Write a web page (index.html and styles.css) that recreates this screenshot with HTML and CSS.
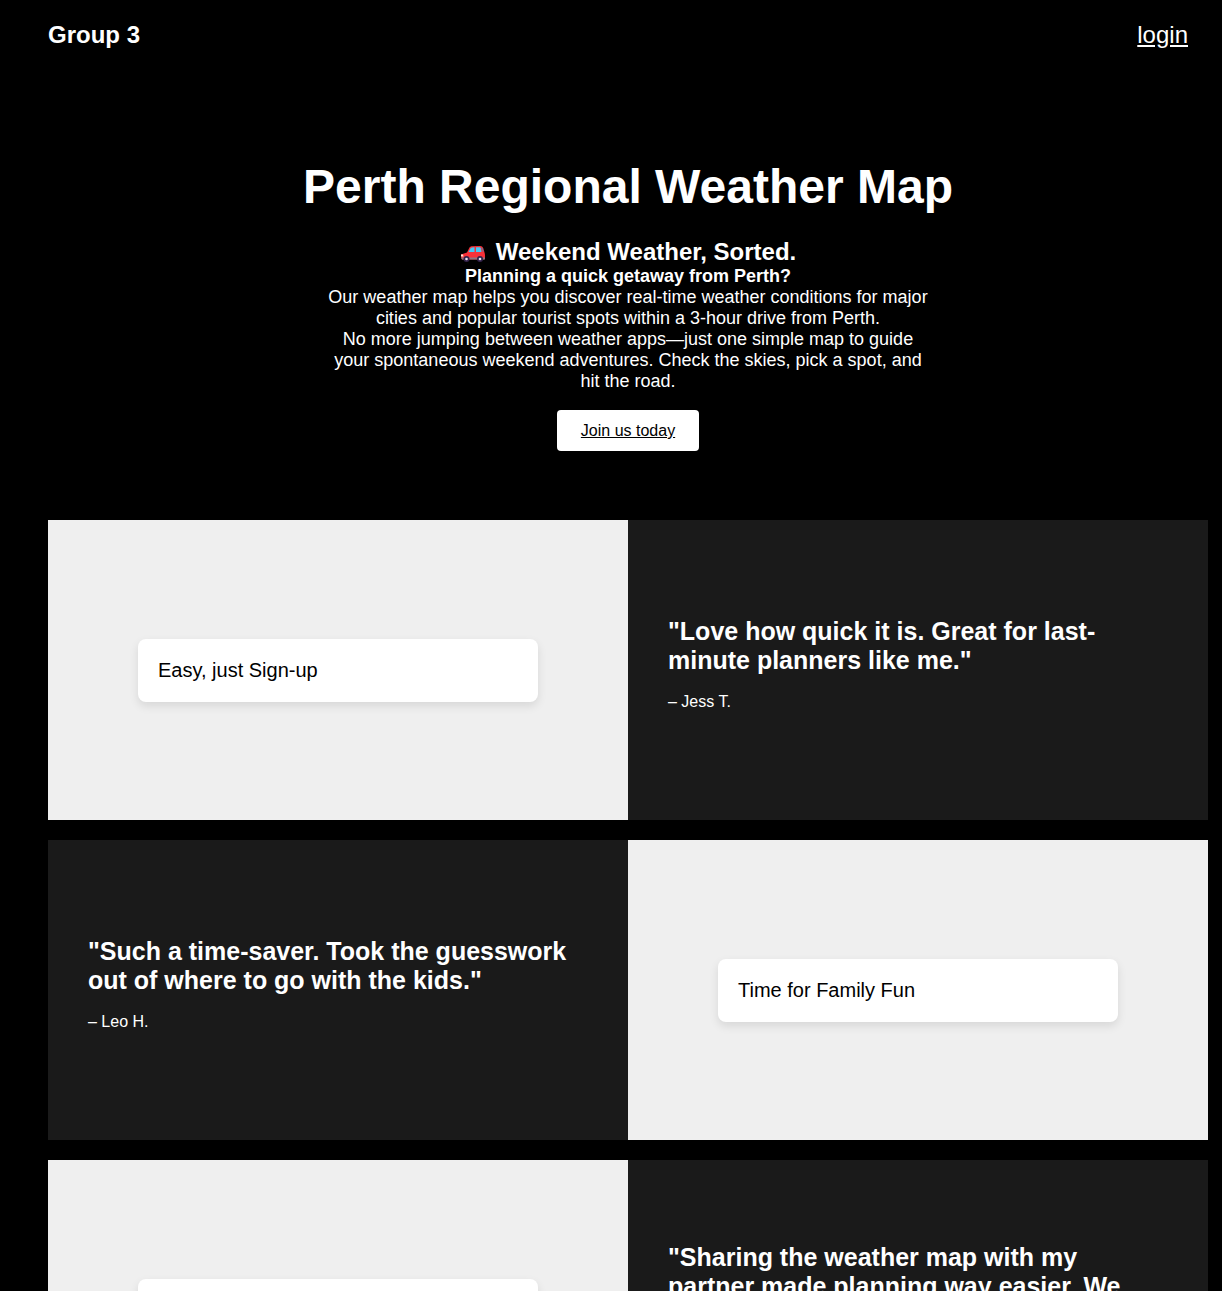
FILE: index.html
```html
<!DOCTYPE html>
<html lang="en">
<head>
<meta charset="utf-8">
<meta name="viewport" content="width=device-width, initial-scale=1">
<title>Perth Regional Weather Map</title>
<link rel="stylesheet" href="styles.css">
</head>
<body>
<div class="page">
  <header class="navbar">
    <div class="brand">Group 3</div>
    <nav><a class="login" href="#login">login</a></nav>
  </header>
  <main>
    <section class="hero">
      <h1 class="hero-title">Perth Regional Weather Map</h1>
      <div class="hero-text">
        <h2 class="hero-subtitle"><svg class="car" viewBox="0 0 26 18" aria-hidden="true">
          <path d="M1 9.500L7 7.500L9.500 2.500Q10 1.500 11.500 1.300L20 1Q22.500 1 23.200 3L24.500 7.500Q25.200 9 25 13L24 14.500H2Q1 13 1 9.500Z" fill="#f83038"/>
          <path d="M8.500 7L10.700 3Q11 2.500 12 2.400L14.500 2.200V7Z" fill="#45c8f5"/>
          <path d="M16 2.200H19.500Q20.500 2.200 20.800 3L21.500 7H16Z" fill="#45c8f5"/>
          <path d="M21.500 2.300L22.500 3L23.700 6.500H22.600Z" fill="#3a8fb5"/>
          <path d="M1 12.500H25V14.500H2Z" fill="#8c7580"/>
          <path d="M1 9.500H3L3.500 11.500H1Z" fill="#ffe9d8"/>
          <circle cx="6.500" cy="14" r="3" fill="#33224b"/><circle cx="6.500" cy="14" r="1.300" fill="#e8e3ee"/>
          <circle cx="20" cy="14" r="3" fill="#33224b"/><circle cx="20" cy="14" r="1.300" fill="#e8e3ee"/>
        </svg>Weekend Weather, Sorted.</h2>
        <p><strong>Planning a quick getaway from Perth?</strong></p>
        <p>Our weather map helps you discover real-time weather conditions for major cities and popular tourist spots within a 3-hour drive from Perth.</p>
        <p>No more jumping between weather apps—just one simple map to guide your spontaneous weekend adventures. Check the skies, pick a spot, and hit the road.</p>
      </div>
      <a class="join" href="#join">Join us today</a>
    </section>
    <section class="stories">
      <div class="row">
        <div class="panel panel-light"><div class="card">Easy, just Sign-up</div></div>
        <figure class="panel panel-dark">
          <blockquote class="quote">"Love how quick it is. Great for last-minute planners like me."</blockquote>
          <figcaption class="author">– Jess T.</figcaption>
        </figure>
      </div>
      <div class="row">
        <figure class="panel panel-dark">
          <blockquote class="quote">"Such a time-saver. Took the guesswork out of where to go with the kids."</blockquote>
          <figcaption class="author">– Leo H.</figcaption>
        </figure>
        <div class="panel panel-light"><div class="card">Time for Family Fun</div></div>
      </div>
      <div class="row">
        <div class="panel panel-light"><div class="card">Share the Map</div></div>
        <figure class="panel panel-dark">
          <blockquote class="quote">"Sharing the weather map with my partner made planning way easier. We both love it."</blockquote>
          <figcaption class="author">– Sam K.</figcaption>
        </figure>
      </div>
    </section>
  </main>
</div>
</body>
</html>
```
FILE: styles.css
```css
* {
  box-sizing: border-box;
  margin: 0;
  padding: 0;
}

body {
  background: #000;
  color: #fff;
  font-family: Arial, "Liberation Sans", sans-serif;
  font-size: 16px;
}

.page {
  padding: 0 14px 20px 48px;
}

.navbar {
  display: flex;
  justify-content: space-between;
  align-items: center;
  padding: 20px 20px 20px 0;
  font-size: 24px;
  line-height: 30px;
}

.brand {
  font-weight: bold;
}

.login {
  color: #fff;
}

.hero {
  display: flex;
  flex-direction: column;
  align-items: center;
  padding: 89px 20px 69px;
  text-align: center;
}

.hero-title {
  margin-bottom: 24px;
  font-size: 48px;
  line-height: 56px;
}

.hero-text {
  max-width: 600px;
  margin-bottom: 18px;
  font-size: 18px;
  line-height: 21px;
}

.hero-subtitle {
  display: flex;
  justify-content: center;
  align-items: flex-end;
  gap: 10px;
  padding-bottom: 1px;
  font-size: 24px;
  line-height: 26px;
}

.car {
  width: 26px;
  height: 18px;
  margin-bottom: 2px;
}

.join {
  padding: 12px 24px;
  border-radius: 4px;
  background: #fff;
  color: #000;
  font-size: 16px;
  line-height: 17px;
}

.stories {
  display: grid;
  gap: 20px;
}

.row {
  display: grid;
  grid-template-columns: 1fr 1fr;
}

.panel {
  display: flex;
  min-height: 300px;
  padding: 40px;
}

.panel-light {
  align-items: center;
  justify-content: center;
  background: #efefef;
}

.panel-dark {
  flex-direction: column;
  justify-content: center;
  background: #1a1a1a;
}

.card {
  width: 100%;
  max-width: 400px;
  padding: 20px;
  border-radius: 8px;
  background: #fff;
  box-shadow: 0 4px 10px rgba(0, 0, 0, 0.1);
  color: #000;
  font-size: 20px;
  line-height: 23px;
}

.quote {
  margin-bottom: 18px;
  font-size: 25px;
  font-weight: bold;
  line-height: 29px;
}

.author {
  margin-bottom: 12px;
  line-height: 18px;
}
```
